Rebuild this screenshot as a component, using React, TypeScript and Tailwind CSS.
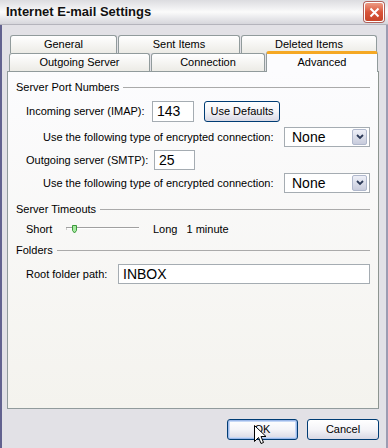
import React from "react";

const font = { fontFamily: '"Liberation Sans", Arial, sans-serif' };

const GroupHeader = ({ label }: { label: string }) => (
  <div className="flex items-center h-[14px]">
    <span>{label}</span>
    <div className="flex-1 h-px bg-[#aaaaaa] ml-[4px]" />
  </div>
);

const Chevron = () => (
  <svg width="8" height="6" viewBox="0 0 8 6">
    <path d="M1 1 L4 4 L7 1" fill="none" stroke="#2c3a58" strokeWidth="1.8" />
  </svg>
);

const Select = ({ value }: { value: string }) => (
  <div className="w-[86px] h-[20px] bg-white border border-[#a5acb2] flex items-center pl-[7px] pr-[2px] text-[14px]">
    <span className="flex-1">{value}</span>
    <div className="w-[15px] h-[16px] rounded-[2px] border border-[#b0b8cc] bg-gradient-to-b from-[#eef0f8] to-[#c8ccdc] flex items-center justify-center">
      <Chevron />
    </div>
  </div>
);

const TextBox = ({ value, className }: { value: string; className: string }) => (
  <div className={`h-[20px] bg-white border border-[#a5acb2] flex items-center pl-[4px] text-[14px] ${className}`}>
    {value}
  </div>
);

const XpButton = ({ label, className }: { label: string; className: string }) => (
  <div
    className={`h-[21px] rounded-[3px] border border-[#003c74] bg-gradient-to-b from-white via-[#f4f4f8] to-[#d8d8e4] flex items-center justify-center ${className}`}
  >
    {label}
  </div>
);

const BackTab = ({ label, w }: { label: string; w: string }) => (
  <div
    className={`${w} h-full rounded-t-[3px] border border-b-0 border-[#919b9c] bg-gradient-to-b from-white to-[#ecebe6] flex items-center justify-center`}
  >
    {label}
  </div>
);

export default function App() {
  return (
    <div className="w-[388px] h-[448px] bg-[#e2e1e6] flex flex-col relative overflow-hidden text-[11px] text-black" style={font}>
      {/* Title bar */}
      <div className="h-[25px] flex items-center pl-[6px] pr-[4px] bg-gradient-to-b from-[#dcdce0] via-[#fbfbfb] to-[#d6d6dc] border-b border-[#b4b4bc]">
        <span className="flex-1 font-bold text-[13px] text-[#111]">Internet E-mail Settings</span>
        <div className="w-[20px] h-[20px] rounded-[3px] border border-[#fff] bg-gradient-to-b from-[#ec9a84] via-[#d9553a] to-[#c84428] flex items-center justify-center shadow-[0_0_0_1px_#b0605a]">
          <svg width="11" height="11" viewBox="0 0 11 11">
            <path d="M1.5 1.5 L9.5 9.5 M9.5 1.5 L1.5 9.5" stroke="white" strokeWidth="2" />
          </svg>
        </div>
      </div>

      <div className="flex-1 flex flex-col border-l-2 border-l-[#62628f] border-r-2 border-r-[#9c9cb2] pl-[5px] pt-[10px]">
        {/* Tabs row 1 */}
        <div className="flex gap-[1px] h-[18px] pl-[3px]">
          <BackTab label="General" w="w-[107px]" />
          <BackTab label="Sent Items" w="w-[122px]" />
          <BackTab label="Deleted Items" w="w-[136px]" />
        </div>
        {/* Tabs row 2 */}
        <div className="flex gap-[1px] h-[18px] pl-[2px] items-end">
          <BackTab label="Outgoing Server" w="w-[141px]" />
          <BackTab label="Connection" w="w-[114px]" />
          <div className="relative z-10 w-[112px] h-[21px] -mb-px rounded-t-[3px] border-x border-[#919b9c] border-t-[3px] border-t-[#f5a824] bg-[#fcfcfe] flex justify-center">
            Advanced
          </div>
        </div>

        {/* Panel */}
        <div className="w-[372px] h-[338px] border border-[#919b9c] border-r-[#8d9590] bg-gradient-to-b from-[#fcfcfe] to-[#f4f3ee] px-[8px] flex flex-col">
          <div className="mt-[8px]">
            <GroupHeader label="Server Port Numbers" />
          </div>
          <div className="mt-[7px] flex items-center h-[21px] pl-[10px]">
            <span className="w-[126px]">Incoming server (IMAP):</span>
            <TextBox value="143" className="w-[42px] h-[21px]" />
            <XpButton label="Use Defaults" className="w-[76px] ml-[10px]" />
          </div>
          <div className="mt-[5px] flex items-center pl-[27px]">
            <span className="flex-1">Use the following type of encrypted connection:</span>
            <Select value="None" />
          </div>
          <div className="mt-[3px] flex items-center pl-[10px]">
            <span className="w-[128px]">Outgoing server (SMTP):</span>
            <TextBox value="25" className="w-[41px]" />
          </div>
          <div className="mt-[3px] flex items-center pl-[27px]">
            <span className="flex-1">Use the following type of encrypted connection:</span>
            <Select value="None" />
          </div>

          <div className="mt-[9px]">
            <GroupHeader label="Server Timeouts" />
          </div>
          <div className="mt-[6px] flex items-center h-[14px] pl-[10px]">
            <span className="w-[40px]">Short</span>
            <svg width="74" height="10" viewBox="0 0 74 10" className="mt-[1px]">
              <line x1="0" y1="2.5" x2="73" y2="2.5" stroke="#a0a0a0" />
              <line x1="1" y1="3.5" x2="73" y2="3.5" stroke="#ffffff" />
              <line x1="0" y1="2" x2="0" y2="5" stroke="#a0a0a0" />
              <path d="M6.5 0.5 H10.5 V5.5 L8.5 8 L6.5 5.5 Z" fill="#a6e8a0" stroke="#3a9a3a" />
            </svg>
            <span className="ml-[13px]">Long</span>
            <span className="ml-[9px]">1 minute</span>
          </div>

          <div className="mt-[7px]">
            <GroupHeader label="Folders" />
          </div>
          <div className="mt-[7px] flex items-center pl-[10px]">
            <span className="w-[92px]">Root folder path:</span>
            <TextBox value="INBOX" className="flex-1" />
          </div>
        </div>

        {/* Dialog buttons */}
        <div className="flex justify-end gap-[9px] mt-[10px] pr-[7px]">
          <XpButton label="OK" className="w-[71px] shadow-[inset_0_0_0_1px_#9cb8e8,inset_0_0_0_2px_#c6d8f6]" />
          <XpButton label="Cancel" className="w-[72px]" />
        </div>
      </div>

      {/* Mouse cursor over OK */}
      <svg width="13" height="20" viewBox="0 0 13 20" className="absolute left-[254px] top-[425px]">
        <path d="M0.5 0.5 L0.5 16.5 L4.5 12.5 L7 18.5 L9.5 17.5 L7 11.5 L12 11.5 Z" fill="white" stroke="black" strokeLinejoin="round" />
      </svg>
    </div>
  );
}
